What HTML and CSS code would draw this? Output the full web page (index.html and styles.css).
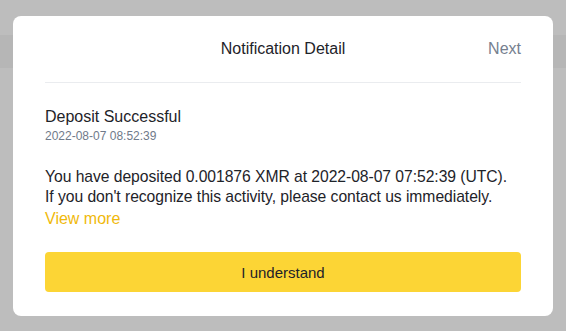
FILE: index.html
```html
<!DOCTYPE html>
<html lang="en">
<head>
    <meta charset="UTF-8">
    <meta name="viewport" content="width=device-width, initial-scale=1.0">
    <title>Notification Detail</title>
    <link rel="stylesheet" href="styles.css">
</head>
<body>
    <div class="modal">
        <div class="modal-header">
            <span class="modal-title">Notification Detail</span>
            <a class="next-link" href="#">Next</a>
        </div>

        <div class="modal-body">
            <h3 class="notice-title">Deposit Successful</h3>
            <div class="notice-time">2022-08-07 08:52:39</div>

            <p class="notice-text">
                You have deposited 0.001876 XMR at 2022-08-07 07:52:39 (UTC).<br>
                If you don't recognize this activity, please contact us immediately.
            </p>
            <a class="view-more" href="#">View more</a>

            <button class="confirm-btn">I understand</button>
        </div>
    </div>
</body>
</html>
```

FILE: styles.css
```css
html, body {
    height: 100%;
}
body {
    margin: 0;
    font-family: "Liberation Sans", Arial, sans-serif;
    color: #1e2329;
    background: linear-gradient(to bottom, #bdbdbd 0, #bdbdbd 35px, #b6b6b6 35px, #b6b6b6 68px, #bdbdbd 68px);
    padding-top: 16px;
    box-sizing: border-box;
}
.modal {
    width: 540px;
    height: 300px;
    margin-left: 13px;
    background: #fff;
    border-radius: 8px;
    padding: 0 32px 24px;
    box-sizing: border-box;
    display: flex;
    flex-direction: column;
}
.modal-header {
    height: 66px;
    flex-shrink: 0;
    display: flex;
    align-items: center;
    justify-content: center;
    position: relative;
    border-bottom: 1px solid #eaecef;
}
.modal-title {
    font-size: 16px;
    color: #1e2329;
}
.next-link {
    position: absolute;
    right: 0;
    top: 50%;
    transform: translateY(-50%);
    font-size: 16px;
    color: #76808f;
    text-decoration: none;
}
.modal-body {
    flex: 1;
    display: flex;
    flex-direction: column;
    padding-top: 23px;
}
.notice-title {
    margin: 0;
    font-size: 16px;
    font-weight: normal;
    line-height: 22px;
}
.notice-time {
    font-size: 12px;
    line-height: 16px;
    color: #707a8a;
}
.notice-text {
    margin: 23px 0 0;
    font-size: 15.7px;
    line-height: 20px;
    letter-spacing: -0.05px;
}
.view-more {
    font-size: 16px;
    line-height: 24px;
    color: #f0b90b;
    text-decoration: none;
    align-self: flex-start;
}
.confirm-btn {
    margin-top: auto;
    height: 40px;
    width: 100%;
    border: none;
    border-radius: 4px;
    background: #fcd535;
    color: #1e2329;
    font-family: inherit;
    font-size: 15px;
    cursor: pointer;
}
```
